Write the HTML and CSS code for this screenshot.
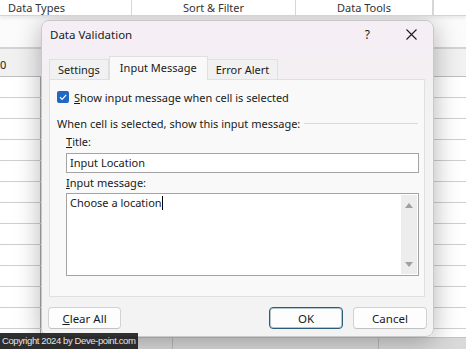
FILE: index.html
```html
<!DOCTYPE html>
<html lang="en">

<head>
  <meta charset="UTF-8">
  <meta name="viewport" content="width=device-width, initial-scale=1.0">
  <title>Data Validation</title>
  <link rel="stylesheet" href="styles.css">
</head>

<body>
  <div class="sheet">
    <div class="ribbon">
      <div class="group group-types">Data Types</div>
      <div class="group group-sort">Sort &amp; Filter</div>
      <div class="group group-tools">Data Tools</div>
      <div class="group"></div>
    </div>
    <div class="formula"></div>
    <div class="colhead"><span class="colnum">0</span></div>
    <div class="rows">
      <div class="row"><span class="cell"></span></div>
      <div class="row"><span class="cell"></span></div>
      <div class="row"><span class="cell"></span></div>
      <div class="row"><span class="cell"></span></div>
      <div class="row"><span class="cell"></span></div>
      <div class="row"><span class="cell"></span></div>
      <div class="row"><span class="cell"></span></div>
      <div class="row"><span class="cell"></span></div>
      <div class="row"><span class="cell"></span></div>
      <div class="row"><span class="cell"></span></div>
      <div class="row"><span class="cell"></span></div>
      <div class="row"><span class="cell"></span></div>
      <div class="row"><span class="cell"></span></div>
    </div>
    <div class="statusbar">
      <span class="sheet-tab"></span>
      <span class="sheet-tab wide"></span>
    </div>
  </div>

  <div class="dialog">
    <div class="titlebar">
      <span class="title">Data Validation</span>
      <span class="help">?</span>
      <svg class="close" width="11" height="11" viewBox="0 0 11 11">
        <path d="M0.5 0.5 L10.5 10.5 M10.5 0.5 L0.5 10.5" stroke="#1a1a1a" stroke-width="1.1" fill="none" />
      </svg>
    </div>

    <div class="tabs">
      <div class="tab">Settings</div>
      <div class="tab active">Input Message</div>
      <div class="tab">Error Alert</div>
    </div>

    <div class="panel">
      <div class="check-row">
        <span class="checkbox">
          <svg width="12" height="12" viewBox="0 0 12 12">
            <path d="M3 6.2 L5.1 8.3 L9.2 3.9" stroke="#ffffff" stroke-width="1.2" fill="none" />
          </svg>
        </span>
        <span><u>S</u>how input message when cell is selected</span>
      </div>

      <div class="group-head">
        <span>When cell is selected, show this input message:</span>
        <span class="rule"></span>
      </div>

      <div class="fields">
        <div class="label"><u>T</u>itle:</div>
        <div class="input">Input Location</div>
        <div class="label"><u>I</u>nput message:</div>
        <div class="textarea">
          <div class="text">Choose a location<span class="caret"></span></div>
          <div class="scrollbar">
            <span class="arrow up"></span>
            <span class="arrow down"></span>
          </div>
        </div>
      </div>
    </div>

    <div class="footer">
      <button class="btn"><u>C</u>lear All</button>
      <span class="spacer"></span>
      <button class="btn primary">OK</button>
      <button class="btn">Cancel</button>
    </div>
  </div>

  <div class="copyright">Copyright 2024 by Deve-point.com</div>
</body>

</html>
```

FILE: styles.css
```css
body {
  margin: 0;
  width: 466px;
  height: 349px;
  overflow: hidden;
  font-family: "Noto Sans", "Open Sans", sans-serif;
  font-size: 11px;
  color: #1a1a1a;
  background-color: #ffffff;
  position: relative;
}

/* spreadsheet behind the dialog */

.sheet {
  display: flex;
  flex-direction: column;
  height: 349px;
}

.ribbon {
  display: flex;
  height: 15px;
  border-bottom: 1px solid #d4d4d4;
  box-shadow: 0 2px 4px rgba(0, 0, 0, 0.08);
  background-color: #ffffff;
  line-height: 15px;
  font-size: 11px;
  color: #333333;
  position: relative;
  z-index: 1;
}

.group {
  border-right: 1px solid #d6d6d6;
  text-align: center;
  white-space: nowrap;
}

.group-types {
  width: 132px;
  text-align: left;
  padding-left: 8px;
  box-sizing: border-box;
}

.group-sort {
  width: 163px;
}

.group-tools {
  width: 136px;
}

.formula {
  height: 31px;
  background-color: #fbfbfb;
}

.colhead {
  height: 27px;
  border-top: 2px solid #d3d3d3;
  border-bottom: 1px solid #bdbdbd;
  background-color: #f1f1f1;
  overflow: hidden;
}

.colnum {
  display: block;
  margin-left: 0;
  margin-top: 10px;
  line-height: 12px;
  font-size: 11px;
  color: #222222;
}

.rows {
  flex: 1;
  overflow: hidden;
}

.row {
  height: 20px;
  border-bottom: 1px solid #cfcfcf;
  background-color: #ffffff;
}

.cell {
  display: block;
  width: 40px;
  height: 100%;
  border-right: 1px solid #a9a9a9;
}

.statusbar {
  height: 11px;
  background-color: #d9d9d9;
  border-top: 1px solid #c4c4c4;
  display: flex;
}

.sheet-tab {
  width: 172px;
  border-right: 1px solid #b8b8b8;
}

.sheet-tab.wide {
  width: 205px;
}

/* dialog */

.dialog {
  position: absolute;
  left: 41px;
  top: 20px;
  width: 393px;
  height: 317px;
  box-sizing: border-box;
  border: 1px solid #c9c9c9;
  border-radius: 8px;
  background: linear-gradient(#f6eef5 0px, #f4eff4 34px, #f2f1f2 60px, #f3f3f3 100px);
  box-shadow: 0 4px 26px rgba(0, 0, 0, 0.3);
  display: flex;
  flex-direction: column;
}

.titlebar {
  display: flex;
  align-items: center;
  height: 26px;
  padding-left: 8px;
  padding-right: 16px;
}

.title {
  flex: 1;
  font-size: 11.5px;
}

.help {
  font-size: 12px;
  margin-right: 36px;
}

.close {
  display: block;
}

.tabs {
  display: flex;
  align-items: flex-end;
  height: 23px;
  margin-top: 9px;
  padding-left: 7px;
  position: relative;
  z-index: 1;
}

.tab {
  height: 20px;
  line-height: 20px;
  padding: 0 8px;
  border: 1px solid #e0e0e0;
  border-bottom: none;
  box-sizing: border-box;
  background-color: #f1f1f1;
  white-space: nowrap;
}

.tab + .tab {
  border-left: none;
}

.tab.active {
  height: 24px;
  line-height: 22px;
  padding: 0 10px;
  margin-bottom: -1px;
  background-color: #f9f9f9;
  border-left: 1px solid #e0e0e0;
  border-right: 1px solid #e0e0e0;
}

.tab.active + .tab {
  border-left: none;
}

.panel {
  margin: 0 8px 0 7px;
  height: 218px;
  box-sizing: border-box;
  border: 1px solid #e0e0e0;
  background-color: #f9f9f9;
  padding: 10px 5px 0 7px;
}

.check-row {
  display: flex;
  align-items: center;
  gap: 5px;
  height: 14px;
  white-space: nowrap;
}

.checkbox {
  display: block;
  width: 12px;
  height: 12px;
  border-radius: 2px;
  background-color: #2068c2;
}

.checkbox svg {
  display: block;
}

.group-head {
  display: flex;
  align-items: center;
  gap: 4px;
  margin-top: 11px;
  height: 16px;
  white-space: nowrap;
}

.rule {
  flex: 1;
  height: 1px;
  background-color: #dadada;
  margin-right: 1px;
}

.fields {
  padding-left: 9px;
}

.label {
  height: 16px;
  line-height: 16px;
  margin-top: 3px;
}

.input {
  height: 20px;
  box-sizing: border-box;
  margin-top: 3px;
  border: 1px solid #a4a4a4;
  background-color: #ffffff;
  padding-left: 3px;
  line-height: 17px;
}

.fields .input + .label {
  margin-top: 2px;
}

.textarea {
  display: flex;
  height: 83px;
  box-sizing: border-box;
  margin-top: 2px;
  border: 1px solid #a4a4a4;
  background-color: #ffffff;
}

.text {
  flex: 1;
  padding: 1px 0 0 3px;
  line-height: 16px;
}

.caret {
  display: inline-block;
  width: 1px;
  height: 14px;
  background-color: #000000;
  vertical-align: -3px;
}

.scrollbar {
  width: 16px;
  margin: 1px 1px 1px 0;
  background-color: #ededed;
  display: flex;
  flex-direction: column;
  justify-content: space-between;
  align-items: center;
  padding: 8px 0 7px;
  box-sizing: border-box;
}

.arrow {
  width: 0;
  height: 0;
  border-left: 4px solid transparent;
  border-right: 4px solid transparent;
}

.arrow.up {
  border-bottom: 5px solid #a0a0a0;
}

.arrow.down {
  border-top: 5px solid #a0a0a0;
}

.footer {
  display: flex;
  gap: 10px;
  padding: 0 6px 0 6px;
  margin-top: 10px;
}

.spacer {
  flex: 1;
}

.btn {
  width: 74px;
  height: 22px;
  padding: 0;
  font-family: "Noto Sans", "Open Sans", sans-serif;
  font-size: 11.5px;
  color: #1a1a1a;
  background-color: #fdfdfd;
  border: 1px solid #d2d2d2;
  border-bottom-color: #c2c2c2;
  border-radius: 4px;
}

.btn:first-child {
  width: 73px;
}

.btn.primary {
  border: 1px solid #2b5d78;
  box-shadow: inset 0 0 0 1px rgba(43, 93, 120, 0.35);
}

.copyright {
  position: absolute;
  left: 0;
  bottom: 0;
  width: 138px;
  height: 16px;
  line-height: 16px;
  padding-left: 2px;
  box-sizing: border-box;
  background-color: rgba(32, 32, 32, 0.93);
  color: #e4e4e4;
  font-family: "Liberation Sans", Arial, sans-serif;
  font-size: 9.5px;
  letter-spacing: -0.4px;
  white-space: nowrap;
  overflow: hidden;
}
```
